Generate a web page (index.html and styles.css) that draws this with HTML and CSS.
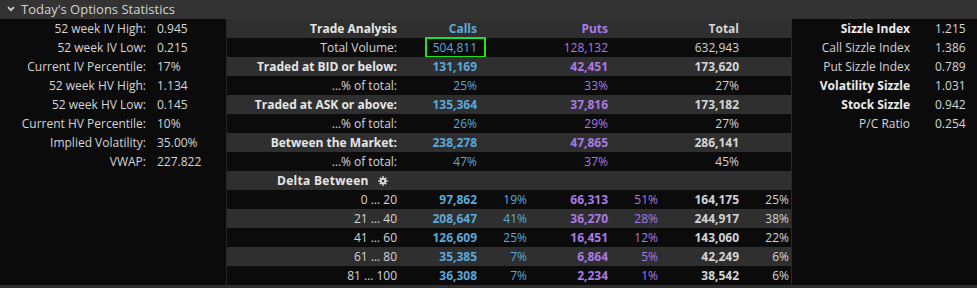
FILE: index.html
```html
<!DOCTYPE html>
<html>
<head>
<meta charset="utf-8">
<link rel="stylesheet" href="styles.css">
</head>
<body>
<div class="app">
  <div class="titlebar">
    <svg class="chev" width="8" height="6" viewBox="0 0 8 6"><path d="M1 1.2 L4 4.2 L7 1.2" fill="none" stroke="#cfcfcf" stroke-width="1.8"/></svg>
    <span class="title">Today's Options Statistics</span>
  </div>
  <div class="main">
    <div class="left">
      <div class="kv"><span class="k">52 week IV High:</span><span class="v">0.945</span></div>
      <div class="kv"><span class="k">52 week IV Low:</span><span class="v">0.215</span></div>
      <div class="kv"><span class="k">Current IV Percentile:</span><span class="v">17%</span></div>
      <div class="kv"><span class="k">52 week HV High:</span><span class="v">1.134</span></div>
      <div class="kv"><span class="k">52 week HV Low:</span><span class="v">0.145</span></div>
      <div class="kv"><span class="k">Current HV Percentile:</span><span class="v">10%</span></div>
      <div class="kv"><span class="k">Implied Volatility:</span><span class="v">35.00%</span></div>
      <div class="kv"><span class="k">VWAP:</span><span class="v">227.822</span></div>
    </div>
    <div class="mid">
      <div class="row gray">
        <span class="c b">Trade Analysis</span><span class="c b blue">Calls</span><span class="c"></span><span class="c b purple">Puts</span><span class="c"></span><span class="c b tot">Total</span><span class="c"></span>
      </div>
      <div class="row dark">
        <span class="c">Total Volume:</span><span class="c blue">504,811</span><span class="c"></span><span class="c purple">128,132</span><span class="c"></span><span class="c tot">632,943</span><span class="c"></span>
        <span class="highlight"></span>
      </div>
      <div class="row gray">
        <span class="c b">Traded at BID or below:</span><span class="c b blue">131,169</span><span class="c"></span><span class="c b purple">42,451</span><span class="c"></span><span class="c b tot">173,620</span><span class="c"></span>
      </div>
      <div class="row dark">
        <span class="c">…% of total:</span><span class="c blue">25%</span><span class="c"></span><span class="c purple">33%</span><span class="c"></span><span class="c tot">27%</span><span class="c"></span>
      </div>
      <div class="row gray">
        <span class="c b">Traded at ASK or above:</span><span class="c b blue">135,364</span><span class="c"></span><span class="c b purple">37,816</span><span class="c"></span><span class="c b tot">173,182</span><span class="c"></span>
      </div>
      <div class="row dark">
        <span class="c">…% of total:</span><span class="c blue">26%</span><span class="c"></span><span class="c purple">29%</span><span class="c"></span><span class="c tot">27%</span><span class="c"></span>
      </div>
      <div class="row gray">
        <span class="c b">Between the Market:</span><span class="c b blue">238,278</span><span class="c"></span><span class="c b purple">47,865</span><span class="c"></span><span class="c b tot">286,141</span><span class="c"></span>
      </div>
      <div class="row dark">
        <span class="c">…% of total:</span><span class="c blue">47%</span><span class="c"></span><span class="c purple">37%</span><span class="c"></span><span class="c tot">45%</span><span class="c"></span>
      </div>
      <div class="row gray">
        <span class="c delta b">Delta Between<svg class="gear" width="10" height="10" viewBox="0 0 10 10">
            <g stroke="#dcdcdc" stroke-width="1.6">
              <line x1="5" y1="0.3" x2="5" y2="9.7"/>
              <line x1="0.3" y1="5" x2="9.7" y2="5"/>
              <line x1="1.7" y1="1.7" x2="8.3" y2="8.3"/>
              <line x1="8.3" y1="1.7" x2="1.7" y2="8.3"/>
            </g>
            <circle cx="5" cy="5" r="3" fill="#dcdcdc"/>
            <circle cx="5" cy="5" r="1.3" fill="#2f2f2f"/>
          </svg></span>
        <span class="c"></span><span class="c"></span><span class="c"></span><span class="c"></span><span class="c"></span><span class="c"></span>
      </div>
      <div class="row dark">
        <span class="c">0 … 20</span><span class="c b blue">97,862</span><span class="c blue">19%</span><span class="c b purple">66,313</span><span class="c purple">51%</span><span class="c b tot">164,175</span><span class="c tot">25%</span>
      </div>
      <div class="row gray">
        <span class="c">21 … 40</span><span class="c b blue">208,647</span><span class="c blue">41%</span><span class="c b purple">36,270</span><span class="c purple">28%</span><span class="c b tot">244,917</span><span class="c tot">38%</span>
      </div>
      <div class="row dark">
        <span class="c">41 … 60</span><span class="c b blue">126,609</span><span class="c blue">25%</span><span class="c b purple">16,451</span><span class="c purple">12%</span><span class="c b tot">143,060</span><span class="c tot">22%</span>
      </div>
      <div class="row gray">
        <span class="c">61 … 80</span><span class="c b blue">35,385</span><span class="c blue">7%</span><span class="c b purple">6,864</span><span class="c purple">5%</span><span class="c b tot">42,249</span><span class="c tot">6%</span>
      </div>
      <div class="row dark">
        <span class="c">81 … 100</span><span class="c b blue">36,308</span><span class="c blue">7%</span><span class="c b purple">2,234</span><span class="c purple">1%</span><span class="c b tot">38,542</span><span class="c tot">6%</span>
      </div>
    </div>
    <div class="right">
      <div class="kv2"><span class="k b">Sizzle Index</span><span class="v">1.215</span></div>
      <div class="kv2"><span class="k">Call Sizzle Index</span><span class="v">1.386</span></div>
      <div class="kv2"><span class="k">Put Sizzle Index</span><span class="v">0.789</span></div>
      <div class="kv2"><span class="k b">Volatility Sizzle</span><span class="v">1.031</span></div>
      <div class="kv2"><span class="k b">Stock Sizzle</span><span class="v">0.942</span></div>
      <div class="kv2"><span class="k">P/C Ratio</span><span class="v">0.254</span></div>
    </div>
  </div>
  <div class="footer"></div>
</div>
</body>
</html>
```
FILE: styles.css
```css
* { box-sizing: border-box; }
html, body { margin: 0; padding: 0; background: #0b0b0b; }
body {
  font-family: "Open Sans", "DejaVu Sans", sans-serif;
  font-size: 12px;
  color: #d6d6d6;
}
.app { width: 977px; height: 288px; display: flex; flex-direction: column; }
.titlebar {
  height: 19px;
  background: #333333;
  display: flex;
  align-items: center;
  padding-left: 7px;
  gap: 6px;
}
.title { font-size: 13px; color: #d2d2d2; line-height: 19px; }
.chev { display: block; margin-top: -2px; }
.main { display: flex; height: 266px; }
.left {
  width: 226px;
  background: #0b0b0b;
  border-right: 1px solid #262626;
  box-sizing: content-box;
}
.kv { display: grid; grid-template-columns: 146px auto; column-gap: 11px; height: 19px; line-height: 19px; }
.kv .k { text-align: right; }
.mid { width: 564px; border-right: 1px solid #2a2a2a; box-sizing: content-box; }
.row {
  display: grid;
  grid-template-columns: 173px 80px 50px 81px 50px 81px 49px;
  height: 19px;
  line-height: 19px;
  position: relative;
}
.row.gray { background: #2f2f2f; }
.row.dark { background: #0b0b0b; }
.c { text-align: right; padding-right: 3px; white-space: nowrap; }
.c:last-child { padding-right: 2px; }
.b { font-weight: 700; }
.blue { color: #5aa9dc; }
.purple { color: #a97ae4; }
.tot { color: #d4d4d4; }
.row .c.b:first-child { color: #e6e6e6; }
.c.delta { text-align: left; padding-left: 50px; color: #e6e6e6; letter-spacing: 0.3px; }
.gear { display: inline-block; vertical-align: -1px; margin-left: 9px; }
.highlight {
  position: absolute;
  left: 198px;
  top: -1px;
  width: 61px;
  height: 21px;
  border: 2px solid #1ee21e;
}
.right { flex: 1; background: #0b0b0b; }
.kv2 { display: grid; grid-template-columns: 118px auto; column-gap: 25px; height: 19px; line-height: 19px; }
.kv2 .k { text-align: right; }
.kv2 .k.b { color: #ececec; }
.footer { height: 3px; background: #2e2e2e; }
```
